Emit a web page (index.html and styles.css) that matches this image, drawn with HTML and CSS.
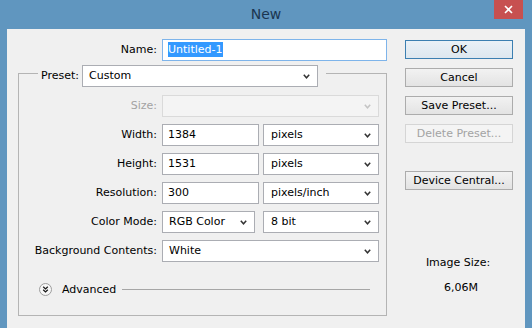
FILE: index.html
```html
<!DOCTYPE html>
<html lang="en">
<head>
  <meta charset="UTF-8">
  <title>New</title>
  <link rel="stylesheet" href="styles.css">
</head>
<body>
  <div class="window">
    <!-- Title bar -->
    <div class="titlebar">
      <span class="title">New</span>
      <div class="close">
        <svg width="9" height="9" viewBox="0 0 9 9"><path d="M1 1 L8 8 M8 1 L1 8" stroke="#fff" stroke-width="1.6"/></svg>
      </div>
    </div>

    <div class="dialog">
      <div class="form">
        <div class="name-row">
          <label>Name:</label>
          <div class="field input name-input"><span class="sel">Untitled-1</span></div>
        </div>

        <!-- Preset group -->
        <div class="group">
          <div class="group-head">
            <label>Preset:</label>
            <div class="field select preset">Custom
              <svg class="arrow" width="7" height="5" viewBox="0 0 7 5"><path d="M0.8 0.8 L3.5 3.8 L6.2 0.8" stroke="#333" stroke-width="1.5" fill="none"/></svg>
            </div>
          </div>

          <div class="rows">
            <div class="row">
              <label class="disabled">Size:</label>
              <div class="field select full off">
                <svg class="arrow" width="7" height="5" viewBox="0 0 7 5"><path d="M0.8 0.8 L3.5 3.8 L6.2 0.8" stroke="#c4c4c4" stroke-width="1.5" fill="none"/></svg>
              </div>
            </div>
            <div class="row">
              <label>Width:</label>
              <div class="field input num">1384</div>
              <div class="field select unit">pixels
                <svg class="arrow" width="7" height="5" viewBox="0 0 7 5"><path d="M0.8 0.8 L3.5 3.8 L6.2 0.8" stroke="#333" stroke-width="1.5" fill="none"/></svg>
              </div>
            </div>
            <div class="row">
              <label>Height:</label>
              <div class="field input num">1531</div>
              <div class="field select unit">pixels
                <svg class="arrow" width="7" height="5" viewBox="0 0 7 5"><path d="M0.8 0.8 L3.5 3.8 L6.2 0.8" stroke="#333" stroke-width="1.5" fill="none"/></svg>
              </div>
            </div>
            <div class="row">
              <label>Resolution:</label>
              <div class="field input num">300</div>
              <div class="field select unit">pixels/inch
                <svg class="arrow" width="7" height="5" viewBox="0 0 7 5"><path d="M0.8 0.8 L3.5 3.8 L6.2 0.8" stroke="#333" stroke-width="1.5" fill="none"/></svg>
              </div>
            </div>
            <div class="row">
              <label>Color Mode:</label>
              <div class="field select mode">RGB Color
                <svg class="arrow" width="7" height="5" viewBox="0 0 7 5"><path d="M0.8 0.8 L3.5 3.8 L6.2 0.8" stroke="#333" stroke-width="1.5" fill="none"/></svg>
              </div>
              <div class="field select unit">8 bit
                <svg class="arrow" width="7" height="5" viewBox="0 0 7 5"><path d="M0.8 0.8 L3.5 3.8 L6.2 0.8" stroke="#333" stroke-width="1.5" fill="none"/></svg>
              </div>
            </div>
            <div class="row">
              <label>Background Contents:</label>
              <div class="field select full">White
                <svg class="arrow" width="7" height="5" viewBox="0 0 7 5"><path d="M0.8 0.8 L3.5 3.8 L6.2 0.8" stroke="#333" stroke-width="1.5" fill="none"/></svg>
              </div>
            </div>
          </div>

          <div class="advanced">
            <svg class="adv-icon" width="13" height="13" viewBox="0 0 13 13">
              <circle cx="6.5" cy="6.5" r="6" fill="#f7f7f7" stroke="#9c9c9c"/>
              <path d="M4.2 3.8 L6.5 5.9 L8.8 3.8 M4.2 6.8 L6.5 8.9 L8.8 6.8" stroke="#1a1a1a" stroke-width="1.3" fill="none"/>
            </svg>
            <span>Advanced</span>
            <div class="adv-line"></div>
          </div>
        </div>
      </div>

      <!-- Buttons -->
      <div class="side">
        <div class="btn default">OK</div>
        <div class="btn">Cancel</div>
        <div class="btn">Save Preset...</div>
        <div class="btn off">Delete Preset...</div>
        <div class="btn">Device Central...</div>
        <div class="image-size">
          <div>Image Size:</div>
          <div class="size-val">6,06M</div>
        </div>
      </div>
    </div>
  </div>
</body>
</html>
```

FILE: styles.css
```css
/* Reset & base */
* { margin: 0; padding: 0; box-sizing: border-box; }
body { width: 532px; height: 328px; overflow: hidden; background: #6096bf; font-family: 'DejaVu Sans', Verdana, sans-serif; font-size: 11px; color: #000; }

/* Title bar */
.titlebar { height: 29px; display: grid; grid-template-columns: 1fr auto 1fr; }
.title { grid-column: 2; font-size: 14px; line-height: 28px; color: #1b3550; }
.close { grid-column: 3; justify-self: end; width: 29px; height: 19px; margin-right: 9px; background: #c75050; display: flex; align-items: center; justify-content: center; }

/* Dialog body */
.dialog { margin: 0 7px; height: 299px; background: #f0f0f0; display: flex; }
.form { width: 388px; }
.side { padding-left: 10px; width: 120px; padding-top: 11px; }

label { display: block; text-align: right; line-height: 22px; }
label.disabled { color: #a3a3a3; }

.name-row { display: flex; margin-top: 10px; height: 22px; }
.name-row label { width: 150px; margin-right: 5px; }

.field { height: 22px; border: 1px solid #abadb3; background: #fff; line-height: 20px; padding-left: 5px; position: relative; white-space: nowrap; }
.name-input { width: 225px; border-color: #7eb4ea; padding-top: 2px; line-height: 15px; }
.sel { display: inline-block; background: #3399ff; color: #fff; padding-right: 1px; }
.select { padding-left: 6px; }
.select .arrow { position: absolute; right: 7px; top: 8px; }

/* Group box */
.group { margin: 12px 0 0 11px; width: 369px; height: 243px; border: 1px solid #b4b4b4; }
.group-head { margin: -9px 0 0 19px; width: 288px; height: 22px; background: #f0f0f0; display: flex; }
.group-head label { width: 44px; text-align: left; padding-left: 3px; }
.preset { width: 236px; }

.rows { margin-top: 8px; display: flex; flex-direction: column; gap: 7px; }
.row { display: flex; height: 22px; }
.row label { width: 138px; margin-right: 5px; }
.full { width: 217px; }
.full.off { background: #f4f4f4; border-color: #dadada; }
.num { width: 97px; margin-right: 4px; }
.mode { width: 93px; margin-right: 8px; }
.unit { width: 116px; padding-left: 7px; }

.advanced { margin-top: 20px; height: 14px; display: flex; align-items: center; }
.adv-icon { margin-left: 20px; margin-right: 10px; }
.adv-line { flex: 1; margin: 1px 16px 0 6px; border-top: 1px solid #a6a6a6; }

/* Buttons */
.btn { width: 108px; height: 19px; margin-bottom: 9px; border: 1px solid #acacac; background: linear-gradient(#f2f2f2, #e3e3e3); text-align: center; line-height: 17px; }
.btn.default { border-color: #3c7fb1; background: linear-gradient(#eaf1f7, #dde7ef); }
.btn.off { color: #a3a3a3; border-color: #d5d5d5; background: #f4f4f4; margin-bottom: 28px; }

.image-size { margin-top: 66px; text-align: center; line-height: 14px; padding-right: 4px; }
.size-val { margin-top: 11px; padding-left: 6px; }
```
